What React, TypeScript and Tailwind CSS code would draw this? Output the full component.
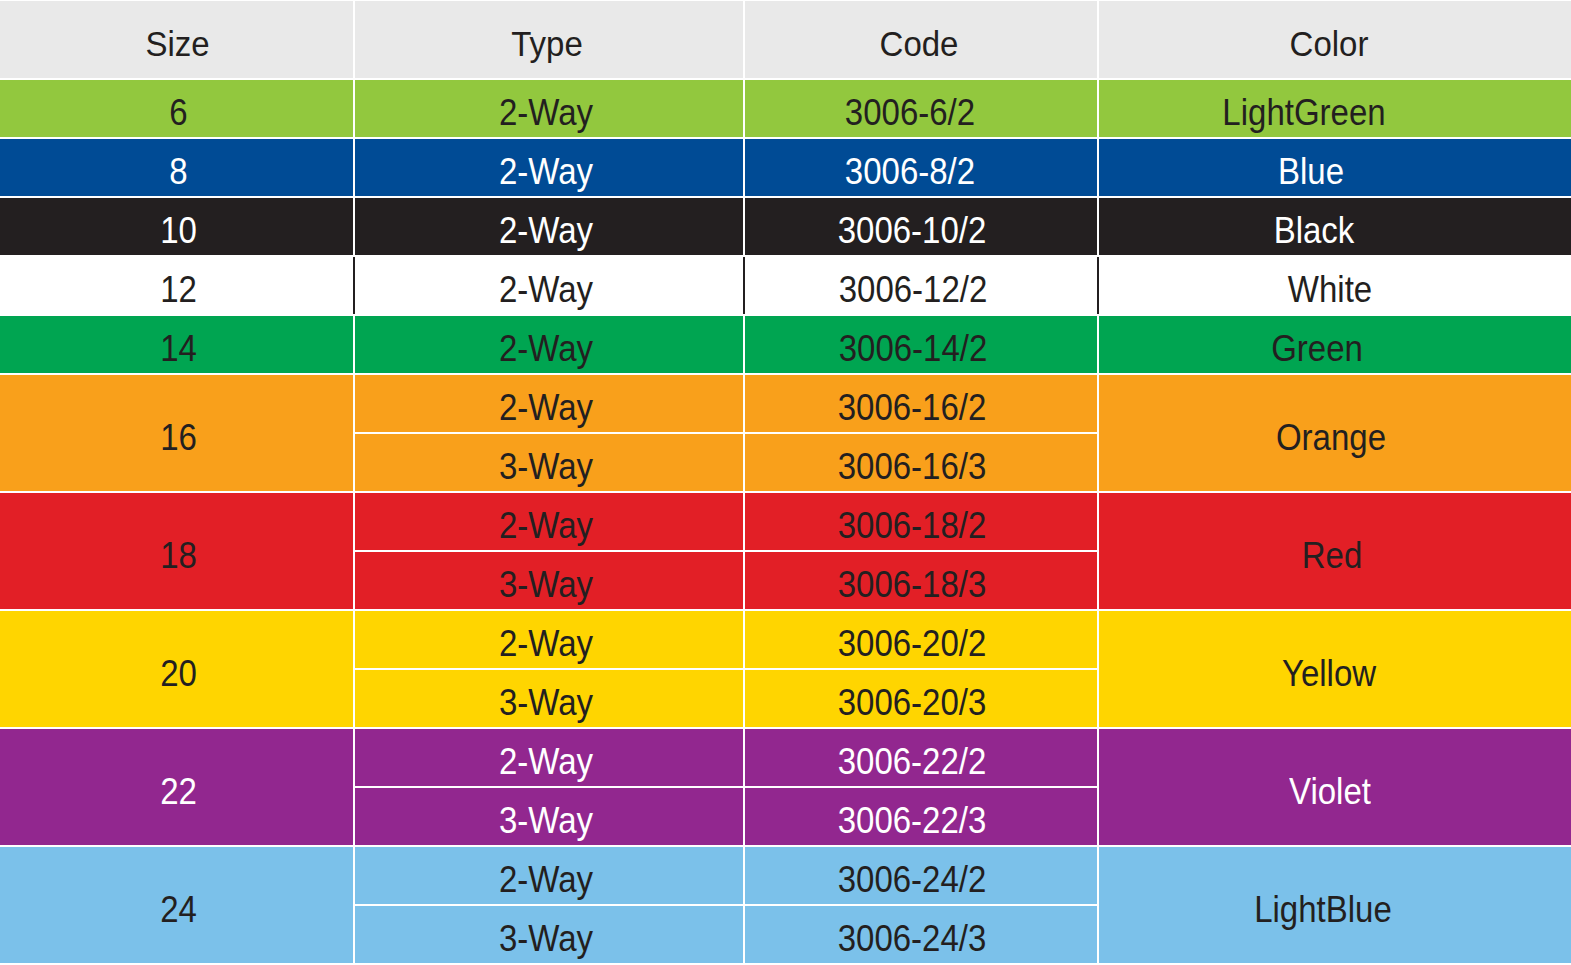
import React from "react";

type Single = {
  size: string;
  bg: string;
  text: string;
  code: string;
  color: string;
  codePad: string;
  colorPad: string;
  white?: boolean;
};

type Double = {
  size: string;
  bg: string;
  text: string;
  codes: [string, string];
  color: string;
  colorPad: string;
};

const singles: Single[] = [
  { size: "6", bg: "bg-[#92c83e]", text: "text-[#231f20]", code: "3006-6/2", color: "LightGreen", codePad: "pr-[22px]", colorPad: "pr-[62px]" },
  { size: "8", bg: "bg-[#004b95]", text: "text-white", code: "3006-8/2", color: "Blue", codePad: "pr-[22px]", colorPad: "pr-[48px]" },
  { size: "10", bg: "bg-[#231f20]", text: "text-white", code: "3006-10/2", color: "Black", codePad: "pr-[18px]", colorPad: "pr-[42px]" },
  { size: "12", bg: "bg-white", text: "text-[#231f20]", code: "3006-12/2", color: "White", codePad: "pr-[16px]", colorPad: "pr-[10px]", white: true },
  { size: "14", bg: "bg-[#00a551]", text: "text-[#231f20]", code: "3006-14/2", color: "Green", codePad: "pr-[16px]", colorPad: "pr-[36px]" },
];

const doubles: Double[] = [
  { size: "16", bg: "bg-[#f9a01b]", text: "text-[#231f20]", codes: ["3006-16/2", "3006-16/3"], color: "Orange", colorPad: "pr-[8px]" },
  { size: "18", bg: "bg-[#e21f26]", text: "text-[#231f20]", codes: ["3006-18/2", "3006-18/3"], color: "Red", colorPad: "pr-[6px]" },
  { size: "20", bg: "bg-[#ffd500]", text: "text-[#231f20]", codes: ["3006-20/2", "3006-20/3"], color: "Yellow", colorPad: "pr-[12px]" },
  { size: "22", bg: "bg-[#92278f]", text: "text-white", codes: ["3006-22/2", "3006-22/3"], color: "Violet", colorPad: "pr-[10px]" },
  { size: "24", bg: "bg-[#7bc1ea]", text: "text-[#231f20]", codes: ["3006-24/2", "3006-24/3"], color: "LightBlue", colorPad: "pr-[24px]" },
];

function Txt({ children }: { children: React.ReactNode }) {
  return <span className="inline-block scale-y-110 leading-none">{children}</span>;
}

export default function App() {
  return (
    <div className="w-[1571px] h-[965px] overflow-hidden bg-white font-['Liberation_Sans',Arial,sans-serif] text-[33px]">
      <div className="grid grid-cols-[353px_388px_352px_472px] grid-rows-[77px_repeat(15,57px)] gap-[2px] pt-px bg-white">
        {/* header */}
        <div className="col-start-1 bg-[#e9e9e9] text-[#231f20] flex items-center justify-center pt-[10px] pl-[2px]">
          <span className="inline-block scale-y-[1.04] leading-none">Size</span>
        </div>
        <div className="col-start-2 bg-[#e9e9e9] text-[#231f20] flex items-center justify-center pt-[10px] pr-[4px]">
          <span className="inline-block scale-y-[1.04] leading-none">Type</span>
        </div>
        <div className="col-start-3 bg-[#e9e9e9] text-[#231f20] flex items-center justify-center pt-[10px] pr-[4px]">
          <span className="inline-block scale-y-[1.04] leading-none">Code</span>
        </div>
        <div className="col-start-4 bg-[#e9e9e9] text-[#231f20] flex items-center justify-center pt-[10px] pr-[12px]">
          <span className="inline-block scale-y-[1.04] leading-none">Color</span>
        </div>

        {singles.map((r) => (
          <React.Fragment key={r.size}>
            <div className={`col-start-1 ${r.bg} ${r.text} flex items-center justify-center pt-[8px] pl-[4px]`}>
              <Txt>{r.size}</Txt>
            </div>
            <div
              className={`col-start-2 ${r.bg} ${r.text} flex items-center justify-center pt-[8px] pr-[6px] ${
                r.white ? "-ml-[2px] border-l-2 border-[#231f20]" : ""
              }`}
            >
              <Txt>2-Way</Txt>
            </div>
            <div
              className={`col-start-3 ${r.bg} ${r.text} flex items-center justify-center pt-[8px] ${r.codePad} ${
                r.white ? "-ml-[2px] border-l-2 border-[#231f20]" : ""
              }`}
            >
              <Txt>{r.code}</Txt>
            </div>
            <div
              className={`col-start-4 ${r.bg} ${r.text} flex items-center justify-center pt-[8px] ${r.colorPad} ${
                r.white ? "-ml-[2px] border-l-2 border-[#231f20]" : ""
              }`}
            >
              <Txt>{r.color}</Txt>
            </div>
          </React.Fragment>
        ))}

        {doubles.map((g) => (
          <React.Fragment key={g.size}>
            <div className={`col-start-1 row-span-2 ${g.bg} ${g.text} flex items-center justify-center pt-[8px] pl-[4px]`}>
              <Txt>{g.size}</Txt>
            </div>
            <div className={`col-start-2 ${g.bg} ${g.text} flex items-center justify-center pt-[8px] pr-[6px]`}>
              <Txt>2-Way</Txt>
            </div>
            <div className={`col-start-3 ${g.bg} ${g.text} flex items-center justify-center pt-[8px] pr-[18px]`}>
              <Txt>{g.codes[0]}</Txt>
            </div>
            <div className={`col-start-4 row-span-2 ${g.bg} ${g.text} flex items-center justify-center pt-[8px] ${g.colorPad}`}>
              <Txt>{g.color}</Txt>
            </div>
            <div className={`col-start-2 ${g.bg} ${g.text} flex items-center justify-center pt-[8px] pr-[6px]`}>
              <Txt>3-Way</Txt>
            </div>
            <div className={`col-start-3 ${g.bg} ${g.text} flex items-center justify-center pt-[8px] pr-[18px]`}>
              <Txt>{g.codes[1]}</Txt>
            </div>
          </React.Fragment>
        ))}
      </div>
    </div>
  );
}
